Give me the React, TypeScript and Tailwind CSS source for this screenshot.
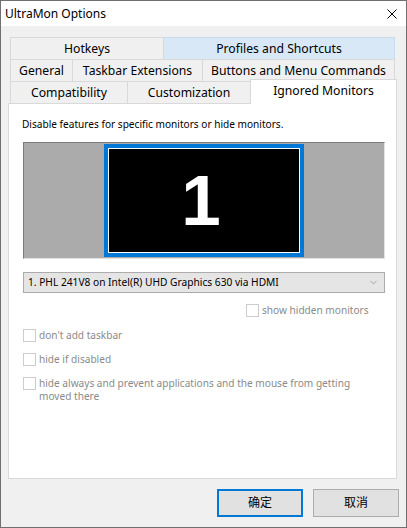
import { ChevronDown } from "lucide-react";

const font = { fontFamily: '"Noto Sans", "Noto Sans CJK SC", sans-serif' };

const Tab = ({ label, w, first, hot }: { label: string; w: string; first?: boolean; hot?: boolean }) => (
  <div
    className={`${w} h-[22px] pt-[2px] flex items-center justify-center border-t border-r text-[12.2px] text-black ${
      first ? "border-l" : ""
    } ${hot ? "bg-[#d9e8f7] border-[#c9dcef]" : "bg-[#f0f0f0] border-[#d9d9d9]"}`}
  >
    {label}
  </div>
);

const Check = ({ label, textW }: { label: string; textW?: string }) => (
  <div className="flex items-start gap-[3px] text-[10.1px] text-[#8a8a8a] leading-[13px]">
    <div className="w-[13px] h-[13px] shrink-0 border border-[#cccccc] bg-white" />
    <span className={textW}>{label}</span>
  </div>
);

export default function App() {
  return (
    <div className="w-[407px] h-[528px] border border-[#707070] bg-[#f0f0f0] flex flex-col" style={font}>
      {/* barra de título */}
      <div className="h-[25px] bg-white flex items-center justify-between pl-[4px] pr-[9px] shrink-0">
        <span className="text-[12px] text-black">UltraMon Options</span>
        <svg width="10" height="10" viewBox="0 0 10 10" className="mt-[1px]">
          <path d="M0.5 0.5 L9.5 9.5 M9.5 0.5 L0.5 9.5" stroke="#000" strokeWidth="1" fill="none" />
        </svg>
      </div>

      <div className="pt-[11px] flex flex-col">
        {/* pestañas */}
        <div className="ml-[9px] flex flex-col">
          <div className="flex">
            <Tab label="Hotkeys" w="w-[154px]" first />
            <Tab label="Profiles and Shortcuts" w="w-[231px]" hot />
          </div>
          <div className="flex">
            <Tab label="General" w="w-[63px]" first />
            <Tab label="Taskbar Extensions" w="w-[130px]" />
            <Tab label="Buttons and Menu Commands" w="w-[192px]" />
          </div>
          <div className="flex items-end h-[22px]">
            <Tab label="Compatibility" w="w-[118px]" first />
            <Tab label="Customization" w="w-[123px]" />
            <div className="w-[147px] h-[25px] -ml-px -mb-px relative z-10 bg-white border-t border-l border-r border-[#d9d9d9] flex items-center justify-center text-[12.2px] text-black pb-[1px]">
              Ignored Monitors
            </div>
          </div>
        </div>

        {/* panel */}
        <div className="ml-[7px] w-[389px] h-[376px] border border-[#d9d9d9] bg-white flex flex-col">
          <div className="ml-[13px] mt-[12px] text-[10.1px] leading-[16px] text-black">
            Disable features for specific monitors or hide monitors.
          </div>

          <div className="ml-[14px] mt-[10px] w-[362px] h-[117px] bg-[#ababab] border-t border-l border-[#7a7a7a] border-r border-b border-r-[#e3e3e3] border-b-[#e3e3e3] flex items-center justify-center">
            <div className="w-[200px] h-[113px] border-[4px] border-[#0078d7] bg-white p-px">
              <div className="w-full h-full bg-black flex items-center justify-center">
                <span
                  className="text-white font-bold text-[71px] leading-none -ml-[6px]"
                  style={{ fontFamily: '"Liberation Sans", Arial, sans-serif' }}
                >
                  1
                </span>
              </div>
            </div>
          </div>

          <div className="ml-[14px] mt-[13px] w-[362px] h-[21px] bg-[#e5e5e5] border border-[#acacac] flex items-center justify-between pl-[4px] pr-[5px]">
            <span className="text-[10.2px] text-black">1. PHL 241V8 on Intel(R) UHD Graphics 630 via HDMI</span>
            <ChevronDown className="w-[11px] h-[11px] text-[#666]" strokeWidth={1.1} />
          </div>

          <div className="mt-[11px] ml-[237px]">
            <Check label="show hidden monitors" />
          </div>

          <div className="ml-[14px] mt-[12px] flex flex-col gap-[11px]">
            <Check label="don't add taskbar" />
            <Check label="hide if disabled" />
            <Check label="hide always and prevent applications and the mouse from getting moved there" textW="w-[330px]" />
          </div>
        </div>

        {/* botones */}
        <div className="mt-[10px] flex justify-end gap-[10px] pr-[7px]">
          <button className="w-[86px] h-[28px] border-2 border-[#0078d7] bg-[#e1e1e1] text-[12px] text-black">
            确定
          </button>
          <button className="w-[86px] h-[28px] border border-[#adadad] bg-[#e1e1e1] text-[12px] text-black">
            取消
          </button>
        </div>
      </div>
    </div>
  );
}
